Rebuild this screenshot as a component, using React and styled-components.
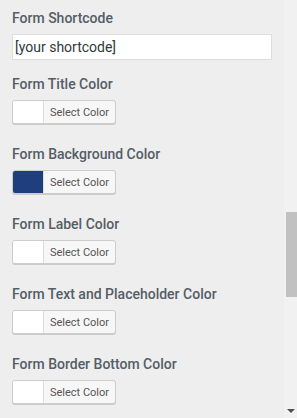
import React from "react";
import styled, { createGlobalStyle } from "styled-components";

const GlobalStyle = createGlobalStyle`
	html, body {
		margin: 0;
		padding: 0;
		background: #eeeeee;
	}
	body {
		font-family: Roboto, "Liberation Sans", sans-serif;
	}
`;

const Frame = styled.div`
	display: flex;
	width: 297px;
	height: 418px;
	overflow: hidden;
	background: #eeeeee;
`;

const Panel = styled.div`
	flex: 1;
	padding: 8px 12px 0 12px;
`;

const Field = styled.div`
	margin-bottom: ${(p) => p.$gap}px;
`;

const Label = styled.div`
	font-size: 14px;
	line-height: 20px;
	font-weight: 500;
	color: #555d66;
	margin-bottom: 6px;
`;

const TextInput = styled.input`
	display: block;
	box-sizing: border-box;
	width: 260px;
	height: 26px;
	margin: 0;
	padding: 0 2px;
	border: 1px solid #dddddd;
	background: #ffffff;
	font-family: Roboto, "Liberation Sans", sans-serif;
	font-size: 14px;
	color: #32373c;
	outline: none;
`;

const ColorButton = styled.div`
	display: flex;
	box-sizing: border-box;
	width: 104px;
	height: 24px;
	border: 1px solid #cccccc;
	border-radius: 3px;
	box-shadow: 0 1px 0 #cccccc;
	background: #f7f7f7;
	overflow: hidden;
`;

const Swatch = styled.span`
	width: 30px;
	background: ${(p) => p.$color};
	border-right: 1px solid #dddddd;
`;

const ButtonText = styled.span`
	flex: 1;
	display: flex;
	align-items: center;
	justify-content: center;
	font-size: 11px;
	color: #555555;
`;

const Scrollbar = styled.div`
	width: 13px;
	display: flex;
	flex-direction: column;
	align-items: flex-end;
	background: #f1f1f1;
`;

const Thumb = styled.div`
	width: 11px;
	height: 85px;
	margin-top: 212px;
	background: #c1c1c1;
`;

const ArrowDown = styled.div`
	margin-top: auto;
	margin-bottom: 5px;
	margin-right: 2px;
	width: 0;
	height: 0;
	border-left: 4px solid transparent;
	border-right: 4px solid transparent;
	border-top: 4px solid #505050;
`;

const colors = [
	{ label: "Form Title Color", color: "#ffffff" },
	{ label: "Form Background Color", color: "#1e3e7e" },
	{ label: "Form Label Color", color: "#ffffff" },
	{ label: "Form Text and Placeholder Color", color: "#ffffff" },
	{ label: "Form Border Bottom Color", color: "#ffffff" },
];

export default function App() {
	return (
		<Frame>
			<GlobalStyle />
			<Panel>
				<Field $gap={14}>
					<Label>Form Shortcode</Label>
					<TextInput defaultValue="[your shortcode]" />
				</Field>
				{colors.map((item) => (
					<Field $gap={20} key={item.label}>
						<Label>{item.label}</Label>
						<ColorButton>
							<Swatch $color={item.color} />
							<ButtonText>Select Color</ButtonText>
						</ColorButton>
					</Field>
				))}
			</Panel>
			<Scrollbar>
				<Thumb />
				<ArrowDown />
			</Scrollbar>
		</Frame>
	);
}
